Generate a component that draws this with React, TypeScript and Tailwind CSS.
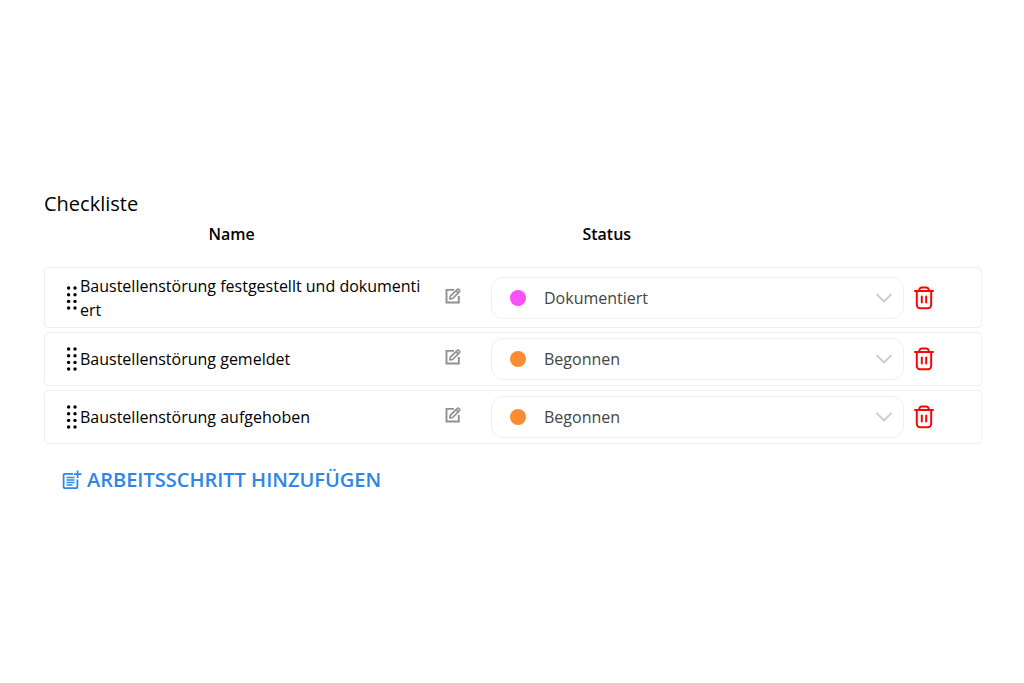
import { useState } from 'react'

interface ChecklistStep {
  id: number
  name: string
  status: string
}

const STATUS_COLORS: Record<string, string> = {
  Dokumentiert: 'bg-[#fa50fa]',
  Begonnen: 'bg-[#fb8c32]',
}

const initialSteps: ChecklistStep[] = [
  { id: 1, name: 'Baustellenstörung festgestellt und dokumentiert', status: 'Dokumentiert' },
  { id: 2, name: 'Baustellenstörung gemeldet', status: 'Begonnen' },
  { id: 3, name: 'Baustellenstörung aufgehoben', status: 'Begonnen' },
]

const DragIcon = () => (
  <svg width="12" height="26" viewBox="0 0 12 26" fill="currentColor" aria-hidden="true">
    {[3, 9.7, 16.4, 23].map(y => (
      <g key={y}>
        <circle cx="2.6" cy={y} r="1.7" />
        <circle cx="9" cy={y} r="1.7" />
      </g>
    ))}
  </svg>
)

const EditIcon = () => (
  <svg width="16" height="16" viewBox="0 0 16 16" fill="none" stroke="currentColor" aria-hidden="true">
    <path d="M9 1.9H1.5v12.6h12.3V8" strokeWidth="1.9" />
    <path d="M4.9 11l.5-2.9 6.7-6.5a1.3 1.3 0 0 1 1.9 0l.3.3a1.3 1.3 0 0 1 0 1.9l-6.6 6.7z" strokeWidth="1.7" strokeLinejoin="round" />
    <path d="M11 2.7l2.3 2.3" strokeWidth="1.7" />
  </svg>
)

const TrashIcon = () => (
  <svg width="20" height="24" viewBox="0 0 20 24" fill="none" stroke="currentColor" strokeWidth="2" strokeLinecap="round" strokeLinejoin="round" aria-hidden="true">
    <path d="M1 5h18" />
    <path d="M5.3 5V4A2.5 2.5 0 0 1 7.800 1.500h4.400a2.500 2.500 0 0 1 2.500 2.500V5" />
    <path d="M2.800 5v14a3.200 3.200 0 0 0 3.200 3.200h8a3.200 3.200 0 0 0 3.200-3.200V5" />
    <path d="M7.800 10.500v6M12.200 10.500v6" />
  </svg>
)

const AddStepIcon = () => (
  <svg width="20" height="20" viewBox="0 0 20 20" fill="none" stroke="currentColor" aria-hidden="true">
    <path d="M11 3.800H2.800A1.200 1.200 0 0 0 1.600 5V17a1.200 1.200 0 0 0 1.200 1.200H14.200a1.200 1.200 0 0 0 1.200-1.200V9.500" strokeWidth="1.800" />
    <path d="M4.500 7.500h8M4.500 10h8M4.500 12.500h8M4.500 15h6" strokeWidth="1.600" />
    <path d="M15.600 .5v7.500M12 4.200h7.500" strokeWidth="1.800" />
  </svg>
)

const App = () => {
  const [steps, setSteps] = useState(initialSteps)

  const setStatus = (id: number, status: string) =>
    setSteps(steps.map(step => (step.id === id ? { ...step, status } : step)))

  const removeStep = (id: number) => setSteps(steps.filter(step => step.id !== id))

  const addStep = () =>
    setSteps([...steps, { id: Date.now(), name: 'Arbeitsschritt', status: 'Begonnen' }])

  return (
    <main className="min-h-screen bg-white pt-[190px] pr-[42px] pl-11 font-['Open_Sans','Noto_Sans',sans-serif] text-base text-black">
      <h1 className="text-xl leading-7">Checkliste</h1>

      <div className="mt-1 flex text-center font-semibold">
        <span className="w-2/5">Name</span>
        <span className="w-2/5">Status</span>
      </div>

      <ul className="mt-[21px] flex flex-col gap-1">
        {steps.map(step => (
          <li
            key={step.id}
            className="grid grid-cols-[35px_minmax(0,345fr)_66px_minmax(0,413fr)_77px] items-center rounded border border-[#efefef] pt-1.5 pb-[5px] not-first:pt-[5px]"
          >
            <button type="button" aria-label="Verschieben" className="cursor-grab pl-[21px]">
              <DragIcon />
            </button>
            <span className="break-all">{step.name}</span>
            <button type="button" aria-label="Namen bearbeiten" className="mb-1 pl-5 text-[#919191]">
              <EditIcon />
            </button>
            <div className="relative">
              <select
                aria-label={`Status: ${step.name}`}
                value={step.status}
                onChange={e => setStatus(step.id, e.target.value)}
                className="h-[42px] w-full appearance-none rounded-xl border border-[#efefef] bg-white pr-12 pl-[52px] text-[#444]"
              >
                {Object.keys(STATUS_COLORS).map(status => (
                  <option key={status}>{status}</option>
                ))}
              </select>
              <span className={`pointer-events-none absolute top-[13px] left-[19px] size-4 rounded-full ${STATUS_COLORS[step.status]}`} />
              <svg className="pointer-events-none absolute top-4 right-3 text-[#ccc]" width="16" height="10" viewBox="0 0 16 10" fill="none" stroke="currentColor" strokeWidth="1.8" strokeLinecap="round" strokeLinejoin="round" aria-hidden="true">
                <path d="M1 1.500l7 7 7-7" />
              </svg>
            </div>
            <button type="button" aria-label="Löschen" onClick={() => removeStep(step.id)} className="pl-[10px] text-[#fa0505]">
              <TrashIcon />
            </button>
          </li>
        ))}
      </ul>

      <button type="button" onClick={addStep} className="mt-[22px] ml-[18px] flex items-center gap-[5px] text-xl leading-7 font-semibold text-[#2e86e6]">
        <AddStepIcon />
        ARBEITSSCHRITT HINZUFÜGEN
      </button>
    </main>
  )
}

export default App
